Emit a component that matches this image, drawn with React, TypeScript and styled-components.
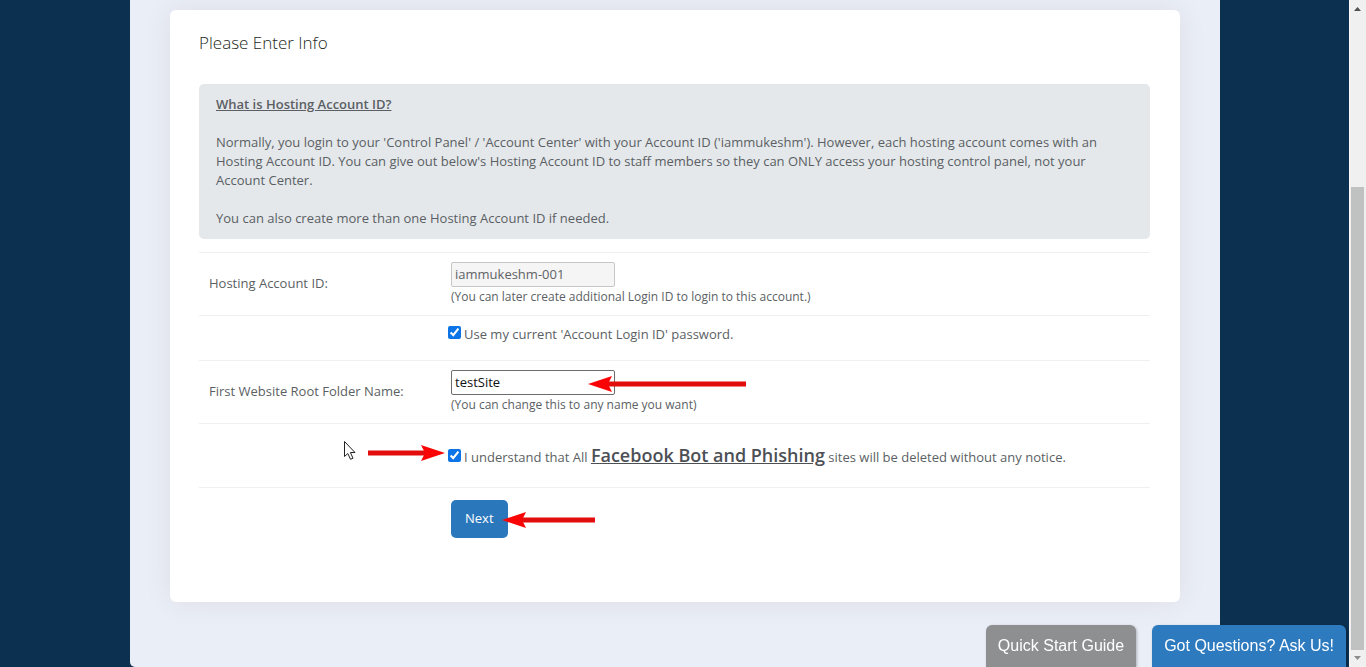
import React from "react";
import styled, { createGlobalStyle } from "styled-components";

const GlobalStyle = createGlobalStyle`
  *, *::before, *::after { box-sizing: border-box; }
  body {
    margin: 0;
    background: #0c304f;
    color: #5b5f64;
    font-family: "Open Sans", "Noto Sans", sans-serif;
    font-size: 13px;
    line-height: 19px;
  }
`;

const Page = styled.div`
  display: grid;
  grid-template-columns: 1fr 17px;
  min-height: 100vh;
`;

const Main = styled.main`
  padding: 0 129px 0 130px;
`;

const Container = styled.div`
  padding: 10px 40px 65px;
  background: #eaeef6;
  border-radius: 0 0 5px 5px;
`;

const Card = styled.section`
  padding: 22px 30px 64px 29px;
  background: #fff;
  border-radius: 6px;
  box-shadow: 0 0 30px rgba(50, 35, 50, 0.07);
`;

const Title = styled.h1`
  margin: 0 0 30px;
  color: #1d1f22;
  font-size: 17px;
  font-weight: 300;
  line-height: 22px;
`;

const Info = styled.div`
  margin-bottom: 13px;
  padding: 11px 17px;
  background: #e4e8eb;
  border-radius: 5px;
`;

const InfoTitle = styled.h2`
  margin: 0 0 19px;
  font-size: 13px;
  font-weight: 600;
  line-height: 19px;
  text-decoration: underline;
`;

const Paragraph = styled.p`
  margin: 0 0 19px;
  &:last-child { margin-bottom: 0; }
`;

const Row = styled.div<{ $pad?: string }>`
  display: grid;
  grid-template-columns: 242px 1fr;
  align-items: center;
  padding: ${(p) => p.$pad ?? "9px 0"};
  padding-left: 10px;
  border-top: 1px solid #eef0f1;
`;

const FieldLabel = styled.label`
  padding-bottom: 2px;
`;

const Field = styled.div`
  grid-column: 2;
  position: relative;
`;

const TextInput = styled.input`
  display: block;
  width: 164px;
  height: 25px;
  padding: 0 3px 2px;
  background: #fff;
  border: 1px solid #6d6d6d;
  border-radius: 2px;
  color: #111;
  font: inherit;
  &:disabled {
    background: #f5f5f5;
    border-color: #c6c6c6;
    color: #606366;
  }
`;

const Hint = styled.div`
  font-size: 12px;
`;

const CheckLabel = styled.label<{ $tall?: boolean }>`
  display: flex;
  align-items: baseline;
  gap: 3px;
  margin-left: -3px;
  line-height: ${(p) => (p.$tall ? "24px" : "19px")};
`;

const Checkbox = styled.input`
  flex: none;
  width: 13px;
  height: 13px;
  margin: 0;
  accent-color: #0d74e7;
`;

const Emphasis = styled.u`
  color: #4c5055;
  font-size: 18px;
  font-weight: 600;
`;

const NextButton = styled.button`
  display: block;
  height: 38px;
  padding: 0 14px 2px;
  background: #2b77bc;
  border: 0;
  border-radius: 5px;
  color: #fff;
  font: inherit;
  font-weight: 500;
`;

const Arrow = styled.svg<{ $left: number; $top: number }>`
  position: absolute;
  left: ${(p) => p.$left}px;
  top: ${(p) => p.$top}px;
  pointer-events: none;
`;

const Dock = styled.div`
  position: fixed;
  right: 20px;
  bottom: 0;
  display: flex;
  gap: 16px;
`;

const DockButton = styled.button<{ $color: string }>`
  height: 42px;
  padding: 0 12px;
  background: ${(p) => p.$color};
  border: 0;
  border-radius: 6px 6px 0 0;
  box-shadow: 1px 1px 3px rgba(0, 0, 0, 0.25);
  color: #fff;
  font-family: "Liberation Sans", Arial, sans-serif;
  font-size: 16px;
`;

const ScrollTrack = styled.div`
  position: sticky;
  top: 0;
  display: flex;
  flex-direction: column;
  align-items: center;
  height: 100vh;
  padding-right: 1px;
  background: #f0f0f0;
  border-left: 1px solid #fafafa;
`;

const ScrollArrow = styled.svg`
  flex: none;
  width: 15px;
  height: 17px;
`;

const ScrollSpace = styled.div`
  flex: 170;
`;

const ScrollThumb = styled.div`
  flex: 463;
  width: 13px;
  background: #c0c1c1;
`;

function RedArrow({ left, top, length, right }: { left: number; top: number; length: number; right?: boolean }) {
  return (
    <Arrow $left={left} $top={top} width={length} height={18} aria-hidden="true">
      <g transform={right ? `translate(${length} 0) scale(-1 1)` : undefined}>
        <path d={`M18 6.5H${length}V11.5H18Z`} fill="#e20d0d" />
        <path d="M0 9L24 1L20 9L24 17Z" fill="#fa0505" />
      </g>
    </Arrow>
  );
}

export default function App() {
  return (
    <>
      <GlobalStyle />
      <Page>
        <Main>
          <Container>
            <Card>
              <Title>Please Enter Info</Title>
              <Info>
                <InfoTitle>What is Hosting Account ID?</InfoTitle>
                <Paragraph>
                  Normally, you login to your 'Control Panel' / 'Account Center' with your Account ID ('iammukeshm').
                  However, each hosting account comes with an Hosting Account ID. You can give out below's Hosting
                  Account ID to staff members so they can ONLY access your hosting control panel, not your Account
                  Center.
                </Paragraph>
                <Paragraph>You can also create more than one Hosting Account ID if needed.</Paragraph>
              </Info>
              <form onSubmit={(e) => e.preventDefault()}>
                <Row>
                  <FieldLabel htmlFor="account">Hosting Account ID:</FieldLabel>
                  <Field>
                    <TextInput id="account" defaultValue="iammukeshm-001" disabled />
                    <Hint>(You can later create additional Login ID to login to this account.)</Hint>
                  </Field>
                </Row>
                <Row $pad="9px 0 16px">
                  <Field>
                    <CheckLabel>
                      <Checkbox type="checkbox" defaultChecked />
                      <span>Use my current 'Account Login ID' password.</span>
                    </CheckLabel>
                  </Field>
                </Row>
                <Row>
                  <FieldLabel htmlFor="folder">First Website Root Folder Name:</FieldLabel>
                  <Field>
                    <TextInput id="folder" defaultValue="testSite" />
                    <Hint>(You can change this to any name you want)</Hint>
                    <RedArrow left={137} top={5} length={158} />
                  </Field>
                </Row>
                <Row $pad="19px 0 18px">
                  <Field>
                    <CheckLabel $tall>
                      <Checkbox type="checkbox" defaultChecked />
                      <span>
                        I understand that All <Emphasis>Facebook Bot and Phishing</Emphasis> sites will be deleted
                        without any notice.
                      </span>
                    </CheckLabel>
                    <RedArrow left={-83} top={1} length={77} right />
                    <Arrow $left={-108} $top={-3} width={14} height={21} viewBox="0 0 14 21" aria-hidden="true">
                      <path
                        d="M1.5 1.5V16.5L4.8 13.5L7.5 19.3L10 18.2L7.4 12.5H12Z"
                        fill="#fff"
                        stroke="#222"
                        strokeWidth="1"
                      />
                    </Arrow>
                  </Field>
                </Row>
                <Row $pad="12px 0 0">
                  <Field>
                    <NextButton type="submit">Next</NextButton>
                    <RedArrow left={51} top={11} length={93} />
                  </Field>
                </Row>
              </form>
            </Card>
          </Container>
        </Main>
        <ScrollTrack aria-hidden="true">
          <ScrollArrow viewBox="0 0 15 17">
            <path d="M4 11H11L7.5 7Z" fill="#505050" />
          </ScrollArrow>
          <ScrollSpace />
          <ScrollThumb />
          <ScrollArrow viewBox="0 0 15 17">
            <path d="M4 6H11L7.5 10Z" fill="#8d8d8d" />
          </ScrollArrow>
        </ScrollTrack>
      </Page>
      <Dock>
        <DockButton type="button" $color="#8d8f90">Quick Start Guide</DockButton>
        <DockButton type="button" $color="#2d7abf">Got Questions? Ask Us!</DockButton>
      </Dock>
    </>
  );
}
